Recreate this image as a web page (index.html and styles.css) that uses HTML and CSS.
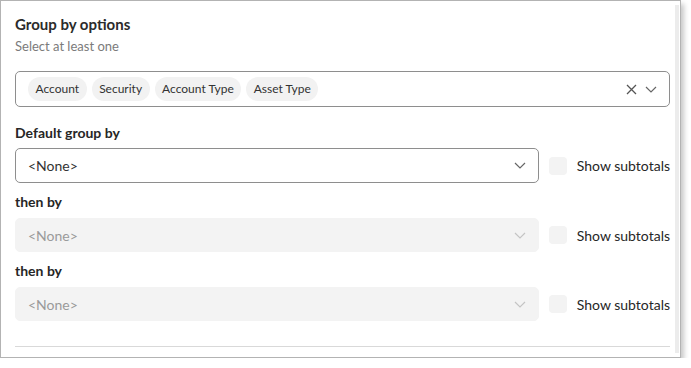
FILE: index.html
```html
<!DOCTYPE html>
<html lang="en">
<head>
  <meta charset="UTF-8">
  <title>Group by options</title>
  <link rel="stylesheet" href="styles.css">
</head>
<body>

  <div class="frame">
    <div class="content">
      <h2 class="title">Group by options</h2>
      <p class="hint">Select at least one</p>

      <!-- multi select -->
      <div class="multi">
        <div class="chips">
          <span class="chip">Account</span>
          <span class="chip">Security</span>
          <span class="chip">Account Type</span>
          <span class="chip">Asset Type</span>
        </div>
        <div class="multi-icons">
          <svg class="icon-x" width="11" height="11" viewBox="0 0 11 11"><path d="M1 1L10 10M10 1L1 10" stroke="#555" stroke-width="1.3" fill="none"/></svg>
          <svg class="icon-chev" width="12" height="7" viewBox="0 0 12 7"><path d="M1 1L6 6L11 1" stroke="#666" stroke-width="1.2" fill="none"/></svg>
        </div>
      </div>

      <!-- group by rows -->
      <div class="field first">
        <label class="field-label">Default group by</label>
        <div class="row">
          <div class="select">
            <span>&lt;None&gt;</span>
            <svg width="12" height="7" viewBox="0 0 12 7"><path d="M1 1L6 6L11 1" stroke="#666" stroke-width="1.2" fill="none"/></svg>
          </div>
          <div class="check"><span class="box"></span>Show subtotals</div>
        </div>
      </div>

      <div class="field">
        <label class="field-label">then by</label>
        <div class="row">
          <div class="select disabled">
            <span>&lt;None&gt;</span>
            <svg width="12" height="7" viewBox="0 0 12 7"><path d="M1 1L6 6L11 1" stroke="#c4c4c4" stroke-width="1.2" fill="none"/></svg>
          </div>
          <div class="check"><span class="box"></span>Show subtotals</div>
        </div>
      </div>

      <div class="field">
        <label class="field-label">then by</label>
        <div class="row">
          <div class="select disabled">
            <span>&lt;None&gt;</span>
            <svg width="12" height="7" viewBox="0 0 12 7"><path d="M1 1L6 6L11 1" stroke="#c4c4c4" stroke-width="1.2" fill="none"/></svg>
          </div>
          <div class="check"><span class="box"></span>Show subtotals</div>
        </div>
      </div>

      <hr class="divider">
    </div>
    <div class="scrollbar"></div>
  </div>

</body>
</html>
```

FILE: styles.css
```css
*{box-sizing:border-box;margin:0;padding:0}
body{
  background:#fff;
  font-family:Lato,"Open Sans",sans-serif;
  color:#262626;
}
/* screenshot frame */
.frame{
  width:681px;
  height:358px;
  border:1px solid #b3b3b3;
  box-shadow:3px 4px 5px rgba(0,0,0,.22);
  display:flex;
  overflow:hidden;
}
.content{
  flex:1;
  padding:14px 5px 0 14px;
}
.scrollbar{
  width:4px;
  margin:4px 1px 4px 0;
  background:#ececec;
}
/* heading */
.title{
  font-size:15px;
  line-height:18px;
  font-weight:700;
  color:#2b2b2b;
}
.hint{
  font-size:13px;
  line-height:16px;
  color:#7b7b7b;
  margin-top:5px;
}
/* multi select */
.multi{
  margin-top:17px;
  height:36px;
  border:1px solid #8e8e8e;
  border-radius:5px;
  display:flex;
  align-items:center;
  justify-content:space-between;
  padding:0 12px 0 12px;
}
.chips{display:flex;gap:5px}
.chip{
  height:24px;
  line-height:24px;
  padding:0 7.5px;
  border-radius:12px;
  background:#f2f2f2;
  font-size:12px;
  color:#333;
}
.multi-icons{
  display:flex;
  align-items:center;
  gap:8px;
}
/* fields */
.field{margin-top:10px}
.field.first{margin-top:17px}
.field-label{
  display:block;
  font-size:14px;
  line-height:17px;
  font-weight:700;
  color:#262626;
  margin-bottom:8px;
}
.field.first .field-label{margin-bottom:7px}
.row{
  display:flex;
  align-items:center;
  gap:10px;
}
.select{
  flex:1;
  height:35px;
  border:1px solid #8e8e8e;
  border-radius:5px;
  display:flex;
  align-items:center;
  justify-content:space-between;
  padding:0 12px 0 12px;
  font-size:14px;
  color:#333;
}
.select.disabled{
  height:34px;
  border-color:#f3f3f3;
  background:#f3f3f3;
  color:#9a9a9a;
}
.check{
  flex:none;
  display:flex;
  align-items:center;
  gap:10px;
  white-space:nowrap;
  font-size:14px;
  color:#262626;
}
.check .box{
  width:18px;
  height:18px;
  border-radius:4px;
  background:#f3f3f3;
}
.divider{
  margin-top:25px;
  border:none;
  border-top:1px solid #d9d9d9;
}
```
